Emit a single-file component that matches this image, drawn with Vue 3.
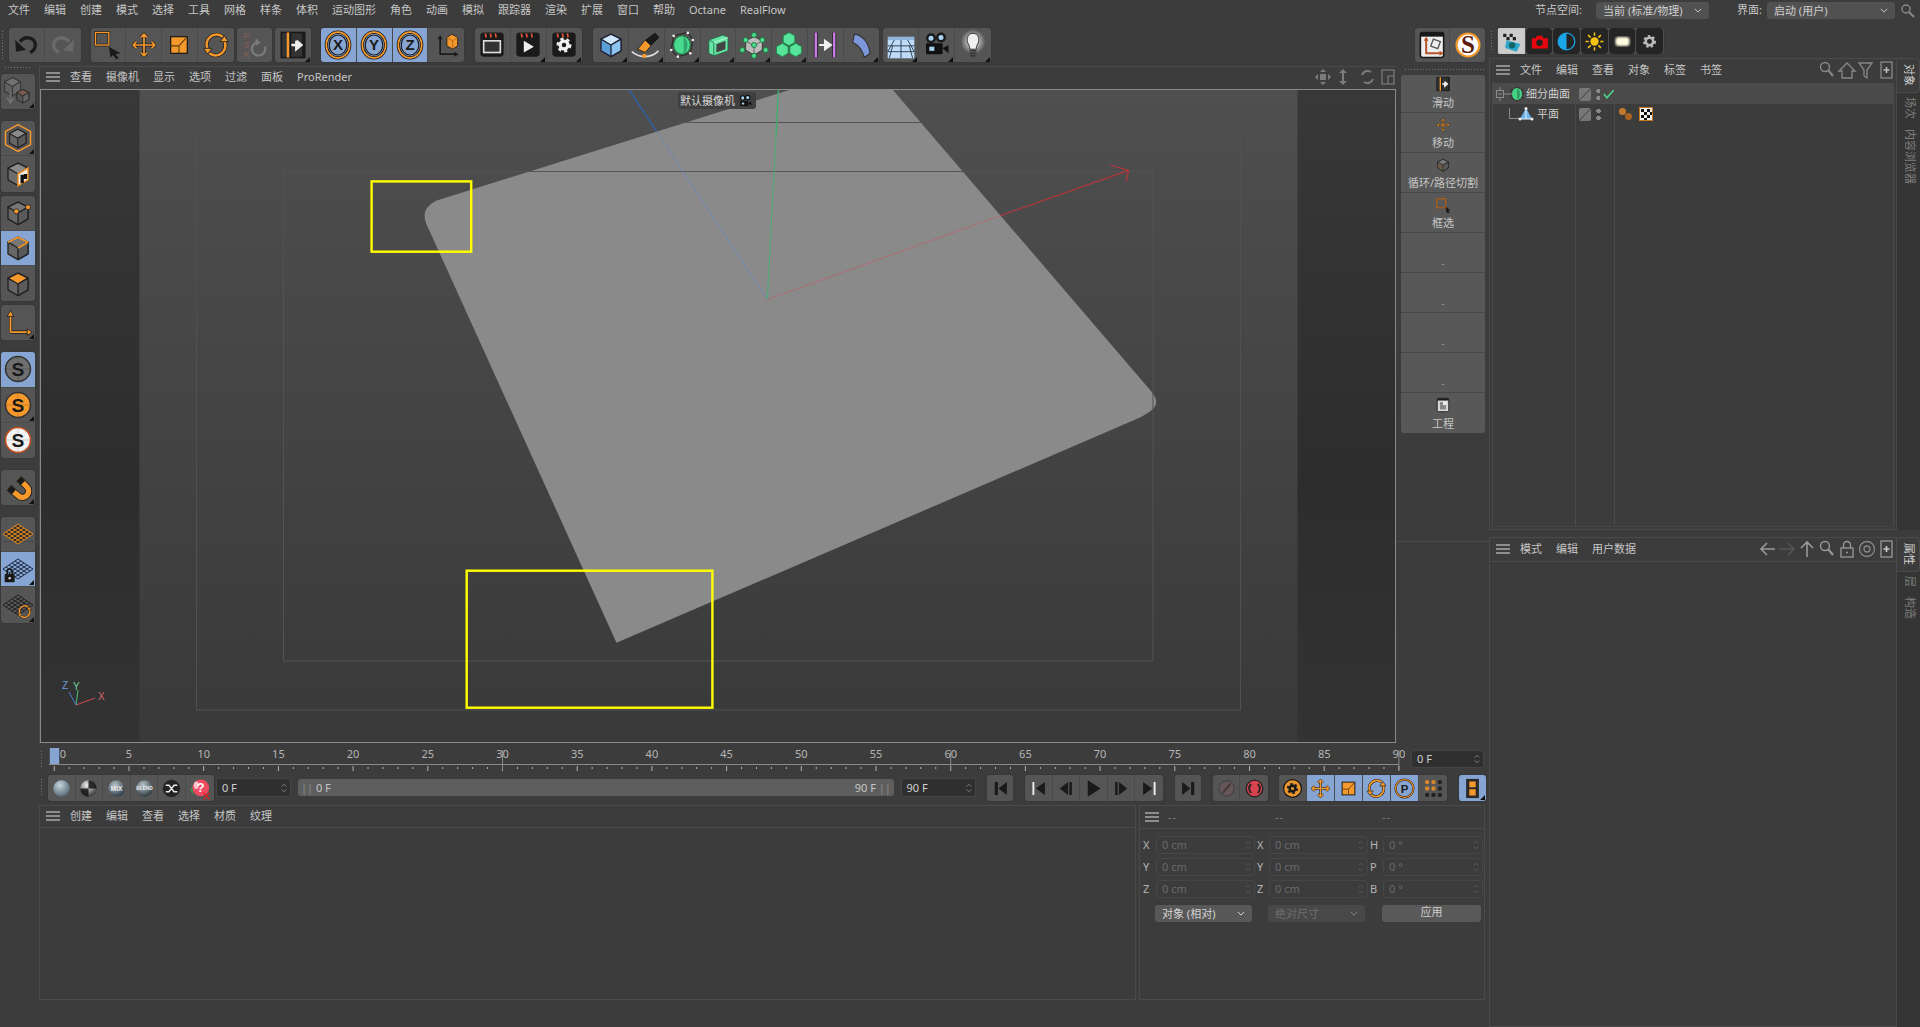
<script setup>
const O = "#f6992c";
const K = "#1a1a1a";

// outlined stroke: dark casing with a coloured line on top
function ol(d, w = 2, c = O) {
  return `<path d="${d}" fill="none" stroke="${K}" stroke-width="${w + 1.6}" stroke-linejoin="round"/><path d="${d}" fill="none" stroke="${c}" stroke-width="${w}" stroke-linejoin="round"/>`;
}
function cube(top, left, right, line = "#222", w = 1.6) {
  return `<path d="M18 5L30 11V25L18 32L6 25V11Z" fill="${left}" stroke="${line}" stroke-width="${w}" stroke-linejoin="round"/><path d="M18 5L30 11L18 18L6 11Z" fill="${top}" stroke="${line}" stroke-width="${w}" stroke-linejoin="round"/><path d="M18 18L30 11V25L18 32Z" fill="${right}" stroke="${line}" stroke-width="${w}" stroke-linejoin="round"/>`;
}
function axisBall(letter, inner = "#86a5d3") {
  return `<ellipse cx="18" cy="18" rx="14" ry="15.5" fill="${inner}" stroke="${K}" stroke-width="4"/><ellipse cx="18" cy="18" rx="14" ry="15.5" fill="none" stroke="${O}" stroke-width="2"/><ellipse cx="18" cy="18" rx="10.5" ry="12" fill="none" stroke="${K}" stroke-width="1.4"/><text x="18" y="24.5" text-anchor="middle" font-family="Liberation Sans" font-weight="700" font-size="18" fill="${K}">${letter}</text>`;
}
function clap(inner) {
  return `<rect x="4" y="3" width="28" height="29" rx="4" fill="${K}"/><path d="M10 4l1 5M16 4l1 5M22 4l1 5" stroke="#e0563a" stroke-width="2"/>${inner}`;
}
function sBall(fill, ring) {
  return `<circle cx="18" cy="18" r="15" fill="${fill}" stroke="${ring}" stroke-width="1.8"/><path d="M18 3V33M3 18H33" stroke="#00000030"/><text x="18" y="26" text-anchor="middle" font-family="Liberation Sans" font-weight="700" font-size="23" fill="${K}">S</text>`;
}
function lattice(c, under = "none") {
  let s = `<path d="M0 18L18 6L36 18L18 30Z" fill="${under}"/>`;
  for (let i = 0; i < 6; i++) {
    const t = i / 5;
    s += `<path d="M${18 * t} ${18 - 12 * t}L${18 + 18 * t} ${30 - 12 * t}M${18 * t} ${18 + 12 * t}L${18 + 18 * t} ${6 + 12 * t}" stroke="${c}" stroke-width="1.2"/>`;
  }
  return s;
}
const arrowRot = (c = O) =>
  ol("M26 8A12 12 0 0 0 8 23", 3, c) + ol("M10 28A12 12 0 0 0 28 13", 3, c) +
  `<path d="M3 22H13L8 29ZM23 14H33L28 7Z" fill="${c}" stroke="${K}"/>`;
const moveIcon = (c = O) => ol("M18 5V31M5 18H31M14 9L18 5L22 9M14 27L18 31L22 27M9 14L5 18L9 22M27 14L31 18L27 22", 2, c);
const scaleIcon = `<rect x="8" y="8" width="20" height="20" fill="${O}" stroke="${K}" stroke-width="1.5"/><path d="M8 19H18V28M18 19L28 8" stroke="#5a3a10" stroke-width="1.3" fill="none"/>`;
const slide = `<rect x="4" y="3" width="28" height="30" fill="#333" stroke="${K}" stroke-width="2"/><path d="M12 3V33" stroke="${O}" stroke-width="3"/><path d="M15 3V33M30 3V33" stroke="${K}" stroke-width="2"/><path d="M16 18H24M22 13L28 18L22 23V13" stroke="#eee" stroke-width="3" fill="#eee"/>`;
const sphere = (c1, c2) =>
  `<defs><radialGradient id="sg${c1.slice(1)}" cx=".4" cy=".3" r=".8"><stop offset="0" stop-color="${c1}"/><stop offset="1" stop-color="${c2}"/></radialGradient></defs><circle cx="18" cy="18" r="13" fill="url(#sg${c1.slice(1)})"/>`;
const gear = (c, r = 5) =>
  `<circle cx="18" cy="18" r="${r + 2.5}" fill="none" stroke="${c}" stroke-width="4"/><circle cx="18" cy="18" r="${r + 5}" fill="none" stroke="${c}" stroke-width="3.5" stroke-dasharray="3.6 3.6"/>`;

const b = (icon, flags = "") => ({ icon, on: flags.includes("on"), more: flags.includes("more") });

const menu = ["文件", "编辑", "创建", "模式", "选择", "工具", "网格", "样条", "体积", "运动图形", "角色", "动画", "模拟", "跟踪器", "渲染", "扩展", "窗口", "帮助", "Octane", "RealFlow"];

const topGroups = [
  { m: 9, items: [
    b(`<path d="M11 14C16 7 27 8 29 16C30 21 27 25 23 27" fill="none" stroke="${K}" stroke-width="4"/><path d="M5 12L6 26L18 24Z" fill="${K}"/>`),
    b(`<path d="M25 14C20 7 9 8 7 16C6 21 9 25 13 27" fill="none" stroke="#6a6a6a" stroke-width="4"/><path d="M31 12L30 26L18 24Z" fill="#6a6a6a"/>`),
  ] },
  { m: 10, items: [
    b(`<rect x="3" y="3" width="16" height="15" fill="none" stroke="${K}" stroke-width="3.2"/><rect x="3" y="3" width="16" height="15" fill="none" stroke="${O}" stroke-width="1.6"/><path d="M19 20L33 28L27 29L31 34L28 35L24 30L21 33Z" fill="${K}"/>`),
    b(moveIcon()),
    b(scaleIcon),
    b(arrowRot()),
  ] },
  { m: 3, items: [
    b(`<g font-family="Liberation Sans" font-weight="700" font-size="10" fill="#7a5c52" text-anchor="middle"><text x="9" y="11">P</text><text x="9" y="22">S</text><text x="9" y="33">R</text></g><path d="M31 20A8 8 0 1 1 21 15" fill="none" stroke="#7c7c7c" stroke-width="2.6"/><path d="M20 10L26 15L20 19Z" fill="#7c7c7c"/>`),
  ] },
  { m: 3, items: [b(slide, "more")] },
  { m: 10, items: [
    b(axisBall("X"), "on"), b(axisBall("Y"), "on"), b(axisBall("Z"), "on"),
    b(`<path d="M11 9V29H30" fill="none" stroke="${K}" stroke-width="2"/><path d="M8 11L11 6L14 11ZM28 26L33 29L28 32Z" fill="${K}"/><path d="M19 9L25 5L32 9V19L26 23L19 19Z" fill="${O}" stroke="${K}"/><path d="M19 9L26 13L32 9M26 13V23" stroke="#a8601a" fill="none"/>`),
  ] },
  { m: 11, items: [
    b(clap(`<rect x="8" y="13" width="20" height="14" fill="#333" stroke="#ddd" stroke-width="2"/>`)),
    b(clap(`<path d="M13 13L25 20L13 27Z" fill="#eee"/>`), "more"),
    b(clap(gear("#eee", 2.2)), "more"),
  ] },
  { m: 11, items: [
    b(cube("#cfe8fb", "#5c9fd8", "#8cc4f0", "#223"), "more"),
    b(`<path d="M29 3L34 9L24 19L17 12Z" fill="${K}"/><path d="M17 12L24 19L17 27L8 23Z" fill="${O}" stroke="${K}"/><path d="M1 26C10 34 24 34 33 25" fill="none" stroke="#ddd" stroke-width="2"/><circle cx="16" cy="31" r="2.6" fill="${O}"/>`, "more"),
    b(`<path d="M8 7L25 3L31 12L28 28L13 32L5 24Z" fill="none" stroke="#2a2a2a" stroke-width="1.4"/><ellipse cx="18" cy="18" rx="10" ry="11" fill="#49d98f" stroke="#173"/><path d="M20 8C26 12 26 24 20 29" fill="#2fa56b"/><circle cx="8" cy="7" r="1.6" fill="#eee"/><circle cx="25" cy="3.5" r="1.6" fill="#eee"/><circle cx="31" cy="12" r="1.6" fill="#eee"/><circle cx="28" cy="28" r="1.6" fill="#eee"/><circle cx="13" cy="32" r="1.6" fill="#eee"/><circle cx="5" cy="24" r="1.6" fill="#eee"/>`, "more"),
    b(`<path d="M7 12L24 6L30 9V25L13 31L7 28Z" fill="#66e6a4" stroke="#264"/><path d="M7 12L13 15V31" fill="none" stroke="#264"/><path d="M13 15L30 9" stroke="#c8f5dd"/><path d="M16 17L27 13V23L16 27Z" fill="#444"/>`, "more"),
    b(`<path d="M18 8L28 13V24L18 30L8 24V13Z" fill="#bbb" stroke="#333"/><path d="M18 19L28 13M18 19L8 13M18 19V30" stroke="#555"/><g fill="#4fd98f" stroke="#173"><circle cx="18" cy="6" r="3"/><circle cx="8" cy="12" r="3"/><circle cx="28" cy="12" r="3"/><circle cx="4" cy="24" r="3"/><circle cx="32" cy="24" r="3"/><circle cx="18" cy="31" r="3"/><circle cx="18" cy="18" r="3"/></g>`, "more"),
    b(`<g stroke="#184" stroke-width="1"><path d="M18 3L25 7V15L18 19L11 15V7Z" fill="#57e39a"/><path d="M10 16L17 20V28L10 32L3 28V20Z" fill="#57e39a"/><path d="M26 16L33 20V28L26 32L19 28V20Z" fill="#57e39a"/></g>`, "more"),
    b(`<path d="M7 3V33M29 3V33" stroke="#222" stroke-width="5"/><path d="M7 3V33M29 3V33" stroke="#c77ae0" stroke-width="3"/><path d="M11 18H20M18 13L25 18L18 23Z" stroke="#eee" stroke-width="2.5" fill="#eee"/>`),
    b(`<path d="M10 5C20 6 27 15 29 28L22 33C20 24 14 17 8 15Z" fill="#7d96d8" stroke="#333" stroke-width="1.4"/>`, "more"),
  ] },
  { m: 4, items: [
    b(`<rect x="2" y="12" width="32" height="22" fill="#bcdcfa"/><path d="M2 19H34M2 26H34M18 12V34M10 12L2 26M26 12L34 26M8 19L4 34M28 19L32 34" stroke="#2a3a4a" stroke-width="1.1"/><rect x="2" y="8" width="32" height="4" fill="#8fb5d8"/>`, "more"),
    b(`<circle cx="12" cy="10" r="6" fill="#1a1a1a"/><circle cx="12" cy="10" r="3" fill="#a8d4f4"/><circle cx="24" cy="9" r="6" fill="#1a1a1a"/><circle cx="24" cy="9" r="3" fill="#a8d4f4"/><rect x="6" y="16" width="20" height="13" rx="1" fill="#111"/><rect x="10" y="20" width="6" height="5" fill="#a8d4f4"/><path d="M26 22L33 18V28Z" fill="#111"/>`, "more"),
    b(`<defs><radialGradient id="glow"><stop offset=".5" stop-color="#fff" stop-opacity=".5"/><stop offset="1" stop-color="#fff" stop-opacity="0"/></radialGradient></defs><circle cx="18" cy="14" r="15" fill="url(#glow)"/><path d="M18 4C11 4 10 12 12 16C14 19 14 21 14 23H22C22 21 22 19 24 16C26 12 25 4 18 4Z" fill="#f0f0f0" stroke="#222"/><path d="M14 25H22M14 28H22M15 31H21" stroke="#333" stroke-width="1.8"/>`, "more"),
  ] },
];
const rightTop = [
  b(`<rect x="4" y="3" width="28" height="30" rx="3" fill="#eee" stroke="${K}" stroke-width="2"/><rect x="4" y="3" width="28" height="5" fill="${K}"/><path d="M11 11V28H29" fill="none" stroke="#b5542a" stroke-width="2.4"/><path d="M8 13L11 8L14 13ZM27 25L32 28L27 31Z" fill="#b5542a"/><rect x="18" y="12" width="9" height="9" fill="none" stroke="#555" stroke-width="1.6" transform="rotate(20 22 16)"/>`),
  b(`<circle cx="18" cy="18" r="15" fill="${O}"/><circle cx="18" cy="18" r="12.5" fill="#fff"/><text x="18" y="28" text-anchor="middle" font-family="Liberation Serif" font-weight="700" font-size="30" fill="#5a1d10">S</text>`),
];
const renderTools = [
  `<rect width="36" height="36" fill="#ccc"/><path d="M5 6h5v5h-5zM15 6h5v5h-5zM10 11h5v5h-5zM20 11h5v5h-5z" fill="#222"/><path d="M10 16L32 22L26 34L8 28Z" fill="#2fa7c8"/><circle cx="19" cy="24" r="5" fill="#166"/>`,
  `<path d="M6 13H12L14 9H22L24 13H31V29H6Z" fill="#e8060f"/><circle cx="18" cy="20" r="5" fill="#222"/>`,
  `<circle cx="18" cy="18" r="13" fill="#222" stroke="#19a5e8" stroke-width="2"/><path d="M18 5A13 13 0 0 0 18 31Z" fill="#19a5e8"/>`,
  `<circle cx="18" cy="18" r="6.5" fill="#f8c212"/><path d="M18 4V9M18 27V32M4 18H9M27 18H32M8 8L12 12M24 24L28 28M8 28L12 24M24 12L28 8" stroke="#f8c212" stroke-width="2.4"/>`,
  `<defs><filter id="blr"><feGaussianBlur stdDeviation="1.4"/></filter></defs><rect x="7" y="11" width="22" height="14" rx="5" fill="#fffbe0" filter="url(#blr)"/>`,
  gear("#bbb", 3.4),
];
const leftGroups = [
  { m: 4, items: [b(`<g opacity=".55"><g transform="translate(-3 -3) scale(.8)">${cube("#8a8a8a", "#6a6a6a", "#777")}</g><path d="M9 18V29M5 25L9 31L13 25" fill="none" stroke="#888" stroke-width="2"/></g><g transform="translate(13 12) scale(.6)">${cube("#7a5a50", "#555", "#666")}</g>`, "more")] },
  { m: 12, items: [
    b(`<path d="M18 2L33 10V26L18 34L3 26V10Z" fill="none" stroke="${O}" stroke-width="1.8"/><g transform="translate(3 3.5) scale(.82)">${cube("#8a8a8a", "#666", "#5a5a5a")}</g>`, "more"),
    b(`${cube("#8a8a8a", "#6c6c6c", "#eee")}<path d="M18 18L30 11V25L18 32Z" fill="#eee" stroke="${O}" stroke-width="1.8"/><path d="M21 19h4v5h-4zM25 24h4v-6h-4zM21 24h4v5h-4z" fill="#111"/>`),
  ] },
  { m: 4, items: [
    b(`${cube("#777", "#666", "#5a5a5a")}<circle cx="16" cy="16" r="3" fill="${O}" stroke="#222"/><circle cx="30" cy="11" r="3" fill="${O}" stroke="#222"/>`),
    b(`${cube("#777", "#666", "#5a5a5a")}<path d="M6 11L18 5L30 11" fill="none" stroke="${O}" stroke-width="2"/><path d="M18 18L30 11" stroke="${O}" stroke-width="2"/>`, "on"),
    b(cube(O, "#666", "#5a5a5a")),
  ] },
  { m: 4, items: [b(ol("M9 29V8M9 29H30", 2.2) + `<path d="M5 10L9 3L13 10ZM29 25L35 29L29 33Z" fill="${O}" stroke="${K}"/>`, "more")] },
  { m: 12, items: [
    b(sBall("#6f6f6f", "#333"), "on"),
    b(sBall(O, "#333"), "more"),
    b(sBall("#f2f2f2", "#c8501f")),
  ] },
  { m: 12, items: [b(`<path d="M7 19L19 29A7.5 7.5 0 0 0 29 18L19 8" fill="none" stroke="${K}" stroke-width="8.5"/><path d="M7 19L19 29A7.5 7.5 0 0 0 29 18L19 8" fill="none" stroke="${O}" stroke-width="6.5"/><path d="M7 19L13 24M19 8L24 13" stroke="${K}" stroke-width="7"/>`, "more")] },
  { m: 12, items: [
    b(lattice("#e98a1c", "#2e2e2e")),
    b(`${lattice("#1e2c44")}<rect x="2" y="24" width="12" height="10" rx="1" fill="${K}"/><path d="M5 24V21A3 3 0 0 1 11 21V24" fill="none" stroke="${K}" stroke-width="2"/><circle cx="8" cy="29" r="1.4" fill="#ddd"/>`, "on more"),
    b(`${lattice("#222")}<g transform="translate(16 16) scale(.55)">${arrowRot()}</g>`, "more"),
  ] },
];
const vpMenu = ["查看", "摄像机", "显示", "选项", "过滤", "面板", "ProRender"];
const palette = [
  { label: "滑动", icon: slide },
  { label: "移动", icon: moveIcon() },
  { label: "循环/路径切割", icon: cube("#777", "#6a5a4a", "#5a5a5a") },
  { label: "框选", icon: `<rect x="4" y="4" width="20" height="20" fill="none" stroke="#a85c18" stroke-width="3"/><path d="M24 22L35 30L30 31L33 36H28L25 33Z" fill="${K}"/>` },
  { label: "-", dim: true }, { label: "-", dim: true }, { label: "-", dim: true }, { label: "-", dim: true },
  { label: "工程", icon: `<rect x="5" y="3" width="26" height="30" rx="3" fill="#ddd" stroke="${K}" stroke-width="2"/><rect x="5" y="3" width="26" height="5" fill="${K}"/><path d="M11 11H25V28H11Z" fill="#888"/><path d="M18 11H25V18H18Z" fill="#eee"/>` },
];

// timeline ruler
const frameX = (f) => 54.3 + f * 14.94;
const frames = Array.from({ length: 91 }, (_, i) => i);
const labels = frames.filter((f) => f % 5 === 0);

const timeA = [
  b(sphere("#c9d6dc", "#45596a")),
  b(sphere("#eeeeee", "#222222") + `<path d="M18 5A13 13 0 0 1 31 18H18V31A13 13 0 0 1 5 18H18Z" fill="#141414" opacity=".85"/>`),
  b(sphere("#bac6cc", "#1e2a34") + `<text x="18" y="22" text-anchor="middle" font-family="Liberation Sans" font-weight="700" font-size="10" fill="#eee">MIX</text>`),
  b(sphere("#b9c5cb", "#1c2830") + `<text x="18" y="21" text-anchor="middle" font-family="Liberation Sans" font-weight="700" font-size="7.5" fill="#eee">BLEND</text>`),
  b(`<circle cx="18" cy="18" r="14" fill="#222" stroke="#555"/><path d="M9 13H14L22 23H27M9 23H14L22 13H27" fill="none" stroke="#eee" stroke-width="2.2"/>`),
  b(`<path d="M3 20L8 13V28Z" fill="#3c8a50"/><circle cx="20" cy="17" r="13" fill="#f04a63"/><ellipse cx="13" cy="13" rx="4" ry="6" fill="#f9c3cb"/><text x="20" y="24" text-anchor="middle" font-family="Liberation Sans" font-weight="700" font-size="20" fill="#fff">?</text><path d="M24 24L34 35M34 24L24 35" stroke="#e02020" stroke-width="2"/>`),
];
const pl = (d, extra = "") => `<path d="${d}" fill="${K}"/>${extra}`;
const timeB = [
  { m: 11.4, single: true, items: [b(pl("M9 8H14V28H9ZM15 18L28 8V28Z"))] },
  { m: 11.5, items: [
    b(pl("M14 18L28 8V28Z", `<path d="M10 8V28" stroke="#eee" stroke-width="3"/>`)),
    b(pl("M9 18L22 8V28ZM24 8H28V28H24Z")),
    b(pl("M9 5L29 18L9 31Z")),
    b(pl("M8 8H12V28H8ZM14 8L27 18L14 28Z")),
    b(pl("M8 8L22 18L8 28Z", `<path d="M26 8V28" stroke="#eee" stroke-width="3"/>`)),
  ] },
  { m: 12, single: true, items: [b(pl("M8 8L21 18L8 28ZM22 8H27V28H22Z"))] },
  { m: 11.5, items: [
    b(`<circle cx="18" cy="18" r="12" fill="#66565a" stroke="#444" stroke-width="2"/><path d="M12 25L24 11" stroke="#44383a" stroke-width="3.5"/>`),
    b(`<circle cx="18" cy="18" r="13" fill="#d9434e" stroke="#222" stroke-width="2"/><path d="M13 11A9 9 0 0 0 13 25M23 11A9 9 0 0 1 23 25" fill="none" stroke="#222" stroke-width="3"/>`),
  ] },
  { m: 11, wide: true, items: [
    b(`<circle cx="18" cy="18" r="14" fill="#e9962f" stroke="${K}" stroke-width="2"/>${gear(K, 2)}`),
    b(moveIcon(), "on"),
    b(scaleIcon, "on"),
    b(arrowRot(), "on"),
    b(`<circle cx="18" cy="18" r="14" fill="#86a5d3" stroke="${K}" stroke-width="3.5"/><circle cx="18" cy="18" r="14" fill="none" stroke="${O}" stroke-width="1.8"/><text x="18" y="24.5" text-anchor="middle" font-family="Liberation Sans" font-weight="700" font-size="18" fill="${K}">P</text>`, "on"),
    b(`<g fill="#d8872a"><circle cx="8" cy="8" r="3.4"/><circle cx="18" cy="8" r="3.4"/><circle cx="8" cy="18" r="3.4"/><circle cx="18" cy="18" r="3.4"/></g><g fill="#222"><circle cx="28" cy="8" r="3.4"/><circle cx="28" cy="18" r="3.4"/><circle cx="8" cy="28" r="3.4"/><circle cx="18" cy="28" r="3.4"/><circle cx="28" cy="28" r="3.4"/></g>`),
  ] },
  { m: 12, single: true, items: [b(`<rect x="8" y="3" width="20" height="30" fill="#2a2a2a"/><path d="M13 7H23V16H13ZM13 19H23V29H13Z" fill="${O}"/>`, "on more")] },
];
const matMenu = ["创建", "编辑", "查看", "选择", "材质", "纹理"];
const coordRows = [
  ["X", "0 cm", "X", "0 cm", "H", "0 °"],
  ["Y", "0 cm", "Y", "0 cm", "P", "0 °"],
  ["Z", "0 cm", "Z", "0 cm", "B", "0 °"],
];
</script>

<template>
  <div class="app">
    <header class="menubar">
      <nav class="menu">
        <span v-for="m in menu" :key="m">{{ m }}</span>
      </nav>
      <div class="spaces">
        <span>节点空间:</span>
        <div class="select sel-node">当前 (标准/物理)<svg class="chev" viewBox="0 0 10 6"><path d="M1 1l4 4 4-4" fill="none" stroke="#ccc" stroke-width="1.2"/></svg></div>
        <span class="lab-ui">界面:</span>
        <div class="select sel-ui">启动 (用户)<svg class="chev" viewBox="0 0 10 6"><path d="M1 1l4 4 4-4" fill="none" stroke="#ccc" stroke-width="1.2"/></svg></div>
        <svg class="top-search" viewBox="0 0 14 14"><circle cx="5" cy="5" r="4" fill="none" stroke="#888" stroke-width="1.4"/><path d="M8 8l5 5" stroke="#888" stroke-width="2"/></svg>
      </div>
    </header>

    <div class="body">
      <div class="left">
        <div class="toolbar">
          <div class="grip-v top-grip"></div>
          <div
            v-for="(g, i) in topGroups"
            :key="i"
            class="group"
            :style="{ marginLeft: g.m + 'px' }"
          >
            <div v-for="(t, j) in g.items" :key="j" class="btn" :class="{ on: t.on, more: t.more }">
              <svg viewBox="0 0 36 36" v-html="t.icon"></svg>
            </div>
          </div>
          <div class="group group-end">
            <div v-for="(t, j) in rightTop" :key="j" class="btn">
              <svg viewBox="0 0 36 36" v-html="t.icon"></svg>
            </div>
          </div>
        </div>

        <div class="work">
          <aside class="tools">
            <div class="grip-h"></div>
            <div
              v-for="(g, i) in leftGroups"
              :key="i"
              class="group vert"
              :style="{ marginTop: g.m + 'px' }"
            >
              <div v-for="(t, j) in g.items" :key="j" class="btn" :class="{ on: t.on, more: t.more }">
                <svg viewBox="0 0 36 36" v-html="t.icon"></svg>
              </div>
            </div>
          </aside>

          <main class="center">
            <div class="stage">
              <section class="viewport">
                <div class="panelmenu">
                  <i class="burger"></i>
                  <span v-for="m in vpMenu" :key="m">{{ m }}</span>
                  <svg class="nav" viewBox="0 0 80 18" width="80" height="18">
                    <g fill="#7c7c7c">
                      <path d="M8 1l3 3H5zM8 17l3-3H5zM0 9l3-3v6zM16 9l-3-3v6z"/><rect x="5" y="6" width="6" height="6"/>
                      <path d="M28 1l4 4h-3v8h3l-4 4-4-4h3V5h-3z"/>
                    </g>
                    <path d="M56 4a6 6 0 0 0-9 3M49 14a6 6 0 0 0 9-3" fill="none" stroke="#7c7c7c" stroke-width="2"/>
                    <rect x="67" y="2" width="12" height="14" fill="none" stroke="#7c7c7c" stroke-width="1.2"/>
                    <path d="M73 16V8h6" fill="none" stroke="#7c7c7c" stroke-width="1.2"/>
                  </svg>
                </div>
                <div class="canvas">
                  <svg class="scene" viewBox="41 90 1354 652" preserveAspectRatio="none">
                    <defs>
                      <linearGradient id="bg" x1="0" y1="0" x2="0" y2="1">
                        <stop offset="0" stop-color="#4f4f4f"/>
                        <stop offset="1" stop-color="#393939"/>
                      </linearGradient>
                      <linearGradient id="bar" x1="0" y1="0" x2="0" y2="1">
                        <stop offset="0" stop-color="#383838"/>
                        <stop offset=".6" stop-color="#2d2d2d"/>
                        <stop offset="1" stop-color="#333"/>
                      </linearGradient>
                    </defs>
                    <rect x="40" y="89" width="1355" height="653" fill="url(#bg)"/>
                    <rect x="40" y="89" width="99.5" height="653" fill="url(#bar)"/>
                    <rect x="1297.5" y="89" width="98" height="653" fill="url(#bar)"/>
                    <path d="M790.6 89.6H892.6L1151.8 392Q1160 402 1153 409Q1146 415 1135.5 419.6L616.5 642.7L430 232Q421 215 427 208Q431 203 436 200.7Z" fill="#8a8a8a"/>
                    <rect x="283.5" y="171.5" width="869.5" height="489.5" fill="none" stroke="#525252"/>
                    <rect x="196.5" y="122.5" width="1044" height="587.5" fill="none" stroke="#505050"/>
                    <path d="M685 122.5H919" stroke="#555"/>
                    <path d="M528 171.5H962" stroke="#555" stroke-width="1.2"/>
                    <path d="M767.3 299.6L776 135" stroke="#52a877" stroke-width="1.2"/>
                    <path d="M776 135L778.4 89.6" stroke="#3eb06c" stroke-width="1.3"/>
                    <path d="M767.3 299.6L656.5 131.3" stroke="#6f87b0"/>
                    <path d="M656.5 131.3L628.8 89.6" stroke="#2c62ae" stroke-width="1.3"/>
                    <path d="M767.3 299.6L1000.8 215.5" stroke="#b06c74"/>
                    <path d="M1000.8 215.5L1128.6 170.4M1110 165L1128.6 170.4L1126 182" fill="none" stroke="#b1373e" stroke-width="1.3"/>
                    <rect x="371.6" y="181.4" width="99.6" height="70.3" fill="none" stroke="#ff0" stroke-width="2.4"/>
                    <rect x="466.7" y="570.7" width="245.7" height="137" fill="none" stroke="#ff0" stroke-width="2.4"/>
                    <path d="M76 705L95 698" stroke="#d24a4a"/>
                    <path d="M76 705L78 690" stroke="#4ac07a"/>
                    <path d="M76 705L69 692" stroke="#4a7fd0"/>
                    <g font-family="Liberation Sans" font-size="10">
                      <text x="62" y="689" fill="#6f97d8">Z</text>
                      <text x="73" y="690" fill="#6fd49a">Y</text>
                      <text x="98" y="700" fill="#d86a6a">X</text>
                    </g>
                  </svg>
                  <div class="camlabel">默认摄像机
                    <svg viewBox="0 0 36 36" width="14" height="14"><circle cx="12" cy="10" r="7" fill="#111"/><circle cx="12" cy="10" r="4" fill="#a8d4f4"/><circle cx="25" cy="9" r="7" fill="#111"/><circle cx="25" cy="9" r="4" fill="#a8d4f4"/><rect x="6" y="18" width="20" height="13" fill="#111"/><rect x="10" y="22" width="6" height="5" fill="#a8d4f4"/><path d="M26 24L34 20V30Z" fill="#111"/></svg>
                  </div>
                </div>
              </section>

              <div class="palette-col">
                <div class="grip-h wide"></div>
                <div class="palette">
                  <div v-for="(c, i) in palette" :key="i" class="cell" :class="{ dim: c.dim }">
                    <svg v-if="c.icon" viewBox="0 0 36 36" v-html="c.icon"></svg>
                    <span>{{ c.label }}</span>
                  </div>
                </div>
              </div>
            </div>

            <div class="timeline">
              <div class="ruler-row">
                <div class="grip-v"></div>
                <svg class="ruler" viewBox="39 743 1366 30">
                  <rect x="49.8" y="748" width="9.4" height="16" fill="#86a5d3"/>
                  <path d="M49 764.5H1399" stroke="#8a8a8a"/>
                  <path v-for="f in frames" :key="f" :d="`M${frameX(f)} ${f % 5 ? 767 : 766}V${f % 5 ? 769 : 771}`" stroke="#b4b4b4"/>
                  <path v-for="f in [30, 60, 90]" :key="'m' + f" :d="`M${frameX(f)} 750V770`" stroke="#8a8a8a"/>
                  <text
                    v-for="f in labels"
                    :key="'l' + f"
                    :x="f === 0 ? 63 : frameX(f)"
                    y="758"
                    text-anchor="middle"
                    class="rlabel"
                  >{{ f }}</text>
                </svg>
                <div class="field f-now">0 F
                  <svg class="spin" viewBox="0 0 8 14"><path d="M1 5l3-3 3 3M1 9l3 3 3-3" fill="none" stroke="#999"/></svg>
                </div>
              </div>
              <div class="trans-row">
                <div class="grip-v"></div>
                <div class="group tsmall first">
                  <div v-for="(t, j) in timeA" :key="j" class="btn">
                    <svg viewBox="0 0 36 36" v-html="t.icon"></svg>
                  </div>
                </div>
                <div class="field f-start">0 F
                  <svg class="spin" viewBox="0 0 8 14"><path d="M1 5l3-3 3 3M1 9l3 3 3-3" fill="none" stroke="#999"/></svg>
                </div>
                <div class="slider">
                  <span><em>||</em> 0 F</span>
                  <span>90 F <em>||</em></span>
                </div>
                <div class="field f-end">90 F
                  <svg class="spin" viewBox="0 0 8 14"><path d="M1 5l3-3 3 3M1 9l3 3 3-3" fill="none" stroke="#999"/></svg>
                </div>
                <div
                  v-for="(g, i) in timeB"
                  :key="i"
                  class="group tsmall"
                  :class="{ single: g.single, wide: g.wide }"
                  :style="{ marginLeft: g.m + 'px' }"
                >
                  <div v-for="(t, j) in g.items" :key="j" class="btn" :class="{ on: t.on, more: t.more }">
                    <svg viewBox="0 0 36 36" v-html="t.icon"></svg>
                  </div>
                </div>
              </div>
            </div>

            <div class="bottom">
              <section class="materials">
                <div class="panelmenu">
                  <i class="burger"></i>
                  <span v-for="m in matMenu" :key="m">{{ m }}</span>
                </div>
              </section>
              <section class="coords">
                <div class="coords-head">
                  <i class="burger"></i>
                  <span>--</span><span>--</span><span>--</span>
                </div>
                <div v-for="r in coordRows" :key="r[0]" class="coord-row">
                  <template v-for="(v, i) in r" :key="i">
                    <label v-if="i % 2 === 0">{{ v }}</label>
                    <div v-else class="cfield">{{ v }}
                      <svg class="spin" viewBox="0 0 8 14"><path d="M1 5l3-3 3 3M1 9l3 3 3-3" fill="none" stroke="#666"/></svg>
                    </div>
                  </template>
                </div>
                <div class="coord-actions">
                  <div class="select c-sel">对象 (相对)<svg class="chev" viewBox="0 0 10 6"><path d="M1 1l4 4 4-4" fill="none" stroke="#ddd" stroke-width="1.2"/></svg></div>
                  <div class="select c-sel off">绝对尺寸<svg class="chev" viewBox="0 0 10 6"><path d="M1 1l4 4 4-4" fill="none" stroke="#888" stroke-width="1.2"/></svg></div>
                  <div class="apply">应用</div>
                </div>
              </section>
            </div>
          </main>
        </div>

        <footer class="status"><i class="burger"></i></footer>
      </div>

      <div class="right">
        <div class="render-row">
          <div class="grip-v"></div>
          <div class="group render">
            <div v-for="(s, i) in renderTools" :key="i" class="rbtn" :class="{ plain: i === 0 }">
              <svg viewBox="0 0 36 36" v-html="s"></svg>
            </div>
          </div>
        </div>

        <div class="dock dock-obj">
          <section class="panel">
            <div class="panelmenu">
              <i class="burger"></i>
              <span>文件</span><span>编辑</span><span>查看</span><span>对象</span><span>标签</span><span>书签</span>
              <svg class="nav" viewBox="0 0 74 18" width="74" height="18">
                <circle cx="6" cy="6" r="4.5" fill="none" stroke="#888" stroke-width="1.4"/><path d="M9 9l5 6" stroke="#888" stroke-width="2"/>
                <path d="M20 10l8-8 8 8h-3v7H23v-7z" fill="none" stroke="#888" stroke-width="1.3"/>
                <path d="M40 2h13l-5 7v8l-3-2V9z" fill="none" stroke="#888" stroke-width="1.3"/>
                <rect x="62" y="1" width="11" height="16" fill="none" stroke="#888" stroke-width="1.3"/><path d="M67.5 6v6M64.5 9h6" stroke="#bbb" stroke-width="1.6"/>
              </svg>
            </div>
            <div class="tree">
              <div class="tree-row active">
                <div class="name">
                  <svg class="node" viewBox="0 0 22 14" width="22" height="14"><rect x="2.5" y="3.5" width="7" height="7" fill="none" stroke="#8a8a8a"/><path d="M4 7h4M9.5 7H20M6 0v3.5M6 10.5V14" stroke="#8a8a8a"/></svg>
                  <svg class="oi" viewBox="0 0 16 16" width="16" height="16"><path d="M2 4L8 1L14 4V12L8 15L2 12Z" fill="none" stroke="#222" stroke-dasharray="2 2"/><ellipse cx="8" cy="8" rx="5" ry="6" fill="#43d486"/><path d="M8 2C12 4 12 12 8 14" fill="#2f9e63"/></svg>
                  <span>细分曲面</span>
                </div>
                <div class="flags">
                  <i class="layer"></i><i class="dots"></i>
                  <svg viewBox="0 0 12 10" width="12" height="10"><path d="M1 5l3 4 7-8" fill="none" stroke="#4fd48a" stroke-width="1.6"/></svg>
                </div>
                <div class="tags"></div>
              </div>
              <div class="tree-row">
                <div class="name sub">
                  <svg class="conn" viewBox="0 0 10 12" width="10" height="12"><path d="M.5 0v10.5H10" fill="none" stroke="#8a8a8a"/></svg>
                  <svg class="oi" viewBox="0 0 16 16" width="16" height="16"><path d="M8 2L14 13H2Z" fill="#6fb4ea"/><path d="M8 2L8 13M2 13L14 13" stroke="#e8f3fb" stroke-width="1"/><circle cx="8" cy="2.5" r="1.5" fill="#eee"/><circle cx="2" cy="13" r="1.5" fill="#eee"/><circle cx="14" cy="13" r="1.5" fill="#eee"/></svg>
                  <span>平面</span>
                </div>
                <div class="flags"><i class="layer"></i><i class="dots"></i></div>
                <div class="tags">
                  <svg viewBox="0 0 16 14" width="16" height="14"><circle cx="4.5" cy="4.5" r="3.5" fill="#c27a2e"/><circle cx="10.5" cy="9.5" r="3.5" fill="#a9621f"/></svg>
                  <svg class="chk" viewBox="0 0 14 14" width="14" height="14"><rect width="14" height="14" fill="#efefef"/><path d="M2 2h3v3H2zM8 2h3v3H8zM5 5h3v3H5zM11 5h2v3h-2zM2 8h3v3H2zM8 8h3v3H8zM5 11h3v2H5z" fill="#111"/><rect x=".5" y=".5" width="13" height="13" fill="none" stroke="#c8791f"/></svg>
                </div>
              </div>
            </div>
          </section>
          <div class="tabs">
            <span class="active">对象</span><span>场次</span><span>内容浏览器</span>
          </div>
        </div>

        <div class="dock dock-attr">
          <section class="panel">
            <div class="panelmenu">
              <i class="burger"></i>
              <span>模式</span><span>编辑</span><span>用户数据</span>
              <svg class="nav" viewBox="0 0 134 18" width="134" height="18">
                <path d="M16 9H2M8 3L2 9L8 15" fill="none" stroke="#999" stroke-width="1.6"/>
                <path d="M20 9H35M29 3L35 9L29 15" fill="none" stroke="#555" stroke-width="1.6"/>
                <path d="M48 17V2M42 8L48 2L54 8" fill="none" stroke="#999" stroke-width="1.6"/>
                <circle cx="66" cy="6" r="4.5" fill="none" stroke="#999" stroke-width="1.4"/><path d="M69 9l5 6" stroke="#999" stroke-width="2"/>
                <rect x="82" y="8" width="12" height="9" fill="none" stroke="#999" stroke-width="1.3"/><path d="M84.5 8V5A3.5 3.5 0 0 1 91.5 5V8" fill="none" stroke="#999" stroke-width="1.3"/><circle cx="88" cy="12.5" r="1" fill="#999"/>
                <circle cx="108" cy="9" r="7.5" fill="none" stroke="#888" stroke-width="1.3"/><circle cx="108" cy="9" r="3" fill="none" stroke="#888" stroke-width="1.3"/>
                <rect x="122" y="1" width="11" height="16" fill="none" stroke="#999" stroke-width="1.3"/><path d="M127.5 6v6M124.5 9h6" stroke="#ccc" stroke-width="1.6"/>
              </svg>
            </div>
          </section>
          <div class="tabs">
            <span class="active">属性</span><span>层</span><span>构造</span>
          </div>
        </div>
      </div>
    </div>
  </div>
</template>

<style scoped>
.app {
  width: 1920px;
  height: 1027px;
  display: flex;
  flex-direction: column;
  overflow: hidden;
  background: #3c3c3c;
  color: #c6c6c6;
  font: 11px/14px "Noto Sans", "Noto Sans CJK SC", sans-serif;
}

/* menu bar */
.menubar {
  height: 27px;
  display: flex;
  justify-content: space-between;
  flex: none;
}
.menu {
  display: flex;
  gap: 14px;
  padding-left: 8px;
  height: 20px;
  align-items: center;
}
.spaces {
  display: flex;
  align-items: flex-start;
  line-height: 20px;
}
.select {
  display: flex;
  justify-content: space-between;
  align-items: center;
  box-sizing: border-box;
  height: 17px;
  margin-top: 2px;
  padding: 0 7px;
  border-radius: 3px;
  background: #515151;
  color: #cfcfcf;
}
.chev {
  width: 8px;
  height: 5px;
}
.sel-node {
  width: 113px;
  margin-left: 14px;
}
.lab-ui {
  margin-left: 28px;
}
.sel-ui {
  width: 128px;
  margin-left: 5px;
}
.top-search {
  width: 14px;
  height: 14px;
  margin: 4px 5px 0 6px;
}

.body {
  flex: 1;
  display: flex;
  min-height: 0;
}
.left {
  width: 1489px;
  display: flex;
  flex-direction: column;
  flex: none;
}

/* grips */
.grip-v {
  width: 3px;
  background-image: radial-gradient(#777 .7px, transparent .8px);
  background-size: 3px 3px;
  flex: none;
}
.grip-h {
  height: 4px;
  margin: 0 3px;
  background-image: radial-gradient(#777 .7px, transparent .8px);
  background-size: 3px 3px;
}

/* tool groups */
.toolbar {
  height: 35px;
  margin-bottom: 4px;
  padding-top: 1px;
  box-sizing: border-box;
  display: flex;
  flex: none;
}
.top-grip {
  height: 30px;
  margin-top: 2px;
  margin-left: 1px;
  margin-right: -4px;
}
.group {
  display: flex;
  flex: none;
  border-radius: 3px;
  overflow: hidden;
  background: #555;
  box-shadow: 0 0 0 1px #383838;
}
.group-end {
  margin-left: auto;
  margin-right: 4px;
}
.btn {
  width: 35.75px;
  height: 34.5px;
  flex: none;
  box-sizing: border-box;
  position: relative;
  display: flex;
  align-items: center;
  justify-content: center;
  border-right: 1px solid #4b4b4b;
}
.btn:last-child {
  border-right: 0;
}
.btn svg {
  width: 30px;
  height: 30px;
}
.btn.on {
  background: #86a5d3;
}
.btn.more::after {
  content: "";
  position: absolute;
  right: 1px;
  bottom: 1px;
  border-left: 5px solid transparent;
  border-bottom: 5px solid #111;
}
.group-end .btn {
  width: 35px;
}

/* left column */
.work {
  flex: 1;
  display: flex;
  min-height: 0;
}
.tools {
  width: 39px;
  flex: none;
  padding-left: 1px;
  box-sizing: border-box;
}
.tools .grip-h {
  width: 28px;
  margin: 0 0 0 3px;
}
.group.vert {
  flex-direction: column;
  width: 34px;
}
.vert .btn {
  width: 34px;
  height: 35.2px;
  border-right: 0;
  border-bottom: 1px solid #4b4b4b;
}
.vert .btn:last-child {
  border-bottom: 0;
}

/* centre */
.center {
  flex: 1;
  display: flex;
  flex-direction: column;
  min-width: 0;
}
.stage {
  height: 677px;
  display: flex;
  flex: none;
}
.viewport {
  width: 1358px;
  flex: none;
  display: flex;
  flex-direction: column;
  border-top: 1px solid #4a4a4a;
  border-left: 1px solid #4a4a4a;
  box-sizing: border-box;
}
.panelmenu {
  height: 22px;
  flex: none;
  box-sizing: border-box;
  padding: 0 0 2px 6px;
  display: flex;
  align-items: center;
  gap: 14px;
}
.burger {
  display: block;
  width: 14px;
  height: 10px;
  margin-right: -4px;
  flex: none;
  background: repeating-linear-gradient(#8e8e8e 0 2px, transparent 2px 4px);
}
.nav {
  margin-left: auto;
  margin-right: 2px;
}
.canvas {
  flex: 1;
  position: relative;
  border: 1px solid #8a8a8a;
  margin-right: 1px;
  overflow: hidden;
}
.scene {
  display: block;
  width: 100%;
  height: 100%;
}
.camlabel {
  position: absolute;
  left: 637px;
  top: 2px;
  height: 17px;
  width: 78px;
  box-sizing: border-box;
  padding-left: 2px;
  display: flex;
  align-items: center;
  gap: 3px;
  background: #3f3f3f;
  border-radius: 3px;
  color: #d8d8d8;
}

/* command palette */
.palette-col {
  width: 91px;
  flex: none;
  padding-left: 4px;
  box-sizing: border-box;
}
.palette-col .grip-h {
  margin: 2px 3px 3px 3px;
}
.palette {
  width: 84px;
  border-radius: 3px;
  overflow: hidden;
  background: #585858;
}
.cell {
  height: 40px;
  box-sizing: border-box;
  display: flex;
  flex-direction: column;
  align-items: center;
  justify-content: space-between;
  padding: 4px 0 2px;
  border-bottom: 1px solid #474747;
  line-height: 14px;
}
.cell:first-child {
  height: 38px;
  padding-top: 1px;
}
.cell:last-child {
  border-bottom: 0;
}
.cell svg {
  width: 16px;
  height: 16px;
}
.cell.dim {
  justify-content: flex-end;
  color: #8a8a8a;
}

/* timeline */
.timeline {
  height: 62px;
  flex: none;
  display: flex;
  flex-direction: column;
}
.ruler-row {
  height: 30px;
  display: flex;
  position: relative;
  flex: none;
}
.ruler-row .grip-v {
  position: absolute;
  left: 1px;
  top: 7px;
  height: 18px;
}
.ruler {
  width: 1366px;
  height: 30px;
  flex: none;
}
.rlabel {
  font: 11px "Noto Sans", sans-serif;
  fill: #b6b6b6;
}
.field {
  box-sizing: border-box;
  display: flex;
  align-items: center;
  justify-content: space-between;
  padding: 0 3px 0 5px;
  height: 19px;
  background: #2f2f2f;
  border: 1px solid #454545;
  border-radius: 3px;
  color: #cfcfcf;
  flex: none;
}
.spin {
  width: 6px;
  height: 12px;
}
.f-now {
  width: 73px;
  height: 18px;
  margin: 7px 0 0 6px;
}
.trans-row {
  display: flex;
  align-items: flex-start;
  margin-top: 2px;
  position: relative;
}
.trans-row .grip-v {
  position: absolute;
  left: 1px;
  top: 3px;
  height: 19px;
}
.tsmall .btn {
  width: 27.6px;
  height: 26px;
}
.tsmall .btn svg {
  width: 23px;
  height: 23px;
}
.tsmall.first {
  margin-left: 9px;
}
.tsmall.single .btn {
  width: 26.5px;
}
.tsmall.wide .btn {
  width: 28px;
}
.f-start {
  width: 74.6px;
  margin: 3px 0 0 2.4px;
}
.slider {
  width: 596px;
  height: 17px;
  margin: 4px 0 0 7.4px;
  padding: 0 3px;
  box-sizing: border-box;
  flex: none;
  display: flex;
  justify-content: space-between;
  align-items: center;
  background: #5e5e5e;
  border-radius: 3px;
}
.slider em {
  font-style: normal;
  color: #8a8a8a;
}
.f-end {
  width: 75px;
  margin: 3px 0 0 6.6px;
}

/* lower panels */
.bottom {
  height: 195px;
  flex: none;
  display: flex;
  gap: 3px;
}
.materials {
  width: 1097px;
  flex: none;
  box-sizing: border-box;
  border: 1px solid #4a4a4a;
}
.materials .panelmenu {
  border-bottom: 1px solid #4a4a4a;
}
.coords {
  width: 346px;
  flex: none;
  box-sizing: border-box;
  border: 1px solid #4a4a4a;
  color: #aaa;
}
.coords-head {
  height: 23px;
  display: grid;
  grid-template-columns: 23px 107px 107px 1fr;
  align-items: center;
  padding-left: 5px;
  padding-bottom: 1px;
  box-sizing: border-box;
  border-bottom: 1px solid #4a4a4a;
  color: #7c7c7c;
  letter-spacing: 1px;
}
.coord-row {
  display: grid;
  grid-template-columns: 15px 99px 14px 99px 15px 100px;
  align-items: center;
  height: 18px;
  margin-top: 4px;
  padding-left: 1px;
}
.coord-row:nth-child(2) {
  margin-top: 7px;
}
.coord-row label {
  padding-left: 2px;
  color: #b4b4b4;
}
.cfield {
  display: flex;
  justify-content: space-between;
  align-items: center;
  height: 18px;
  box-sizing: border-box;
  padding: 0 3px 0 5px;
  border: 1px solid #464646;
  border-radius: 3px;
  color: #6a6a6a;
}
.coord-actions {
  display: flex;
  margin: 7px 0 0 15px;
}
.c-sel {
  width: 97px;
  margin-top: 0;
  background: #585858;
  color: #d4d4d4;
}
.c-sel.off {
  margin-left: 16px;
  background: #484848;
  color: #6e6e6e;
}
.apply {
  width: 99px;
  height: 17px;
  margin-left: 17px;
  border-radius: 3px;
  background: #595959;
  text-align: center;
  color: #cfcfcf;
}
.status {
  flex: 1;
  padding: 10px 0 0 5px;
  box-sizing: border-box;
  border-top: 1px solid #4a4a4a;
}

/* right dock */
.right {
  flex: 1;
  display: flex;
  flex-direction: column;
  min-width: 0;
}
.render-row {
  height: 31px;
  display: flex;
  flex: none;
  gap: 4px;
  padding-left: 1px;
}
.render-row .grip-v {
  height: 22px;
  margin-top: 3px;
}
.render {
  margin: 1px 0 0;
  height: 26px;
  background: #4d4d4d;
  gap: 1px;
  padding: 0 1px;
}
.rbtn {
  width: 26.7px;
  height: 26px;
  display: flex;
  align-items: center;
  justify-content: center;
  background: #252525;
  border-radius: 4px;
}
.rbtn.plain {
  background: #c8c8c8;
  border-radius: 0;
}
.rbtn svg {
  width: 23px;
  height: 23px;
}
.dock {
  display: flex;
  min-height: 0;
}
.dock-obj {
  height: 472px;
  flex: none;
}
.dock-attr {
  flex: 1;
  margin-top: 7px;
}
.panel {
  width: 408px;
  flex: none;
  box-sizing: border-box;
  border: 1px solid #4a4a4a;
  display: flex;
  flex-direction: column;
}
.panel .panelmenu {
  height: 24px;
}
.panel .panelmenu .nav {
  margin-right: 3px;
}
.dock-attr .panelmenu {
  border-bottom: 1px solid #4a4a4a;
}
.tree {
  flex: 1;
  margin: 0 2px 2px;
  border: 1px solid #4a4a4a;
  border-bottom-color: #444;
  background-image: linear-gradient(#4a4a4a, #4a4a4a), linear-gradient(#4a4a4a, #4a4a4a);
  background-size: 1px 100%;
  background-position: 82px 0, 121px 0;
  background-repeat: no-repeat;
}
.tree-row {
  height: 20px;
  display: grid;
  grid-template-columns: 83px 39px 1fr;
  align-items: center;
}
.tree-row.active {
  background: #4a4a4a;
}
.name {
  display: flex;
  align-items: center;
  padding-left: 1px;
  color: #cfcfcf;
}
.name .oi {
  margin-left: -7px;
}
.name span {
  margin-left: 1px;
}
.name.sub {
  padding-left: 16px;
}
.name.sub .oi {
  margin-left: -1px;
}
.name.sub span {
  margin-left: 3px;
}
.flags {
  display: flex;
  align-items: center;
  gap: 3px;
  padding-left: 3px;
}
.layer {
  width: 12px;
  height: 13px;
  border-radius: 2px;
  background: linear-gradient(135deg, #777 46%, #5a5a5a 46% 54%, #777 54%);
}
.dots {
  width: 5px;
  height: 13px;
  margin-left: 2px;
  background-image: radial-gradient(circle at 2.5px 3px, #8a8a8a 2.3px, transparent 2.5px), radial-gradient(circle at 2.5px 10px, #8a8a8a 2.3px, transparent 2.5px);
}
.tags {
  display: flex;
  align-items: center;
  gap: 5px;
  padding-left: 3px;
}

/* vertical tabs */
.tabs {
  flex: 1;
  display: flex;
  flex-direction: column;
  background: #353535;
  color: #7e7e7e;
  line-height: 20px;
}
.tabs span {
  writing-mode: vertical-rl;
  text-orientation: sideways;
  padding: 4px 0 6px 1px;
}
.tabs .active {
  background: #3c3c3c;
  color: #cfcfcf;
  border: 1px solid #4a4a4a;
  border-left: 0;
  border-radius: 0 4px 4px 0;
  padding: 5px 0 6px;
}
</style>

<style>
html,
body {
  margin: 0;
  background: #3c3c3c;
  overflow: hidden;
}
</style>
